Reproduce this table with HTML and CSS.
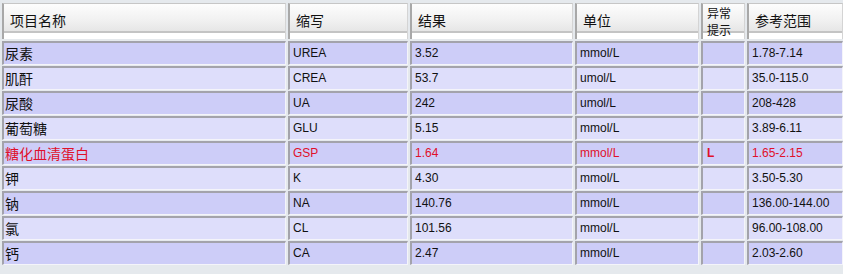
FILE: index.html
```html
<!DOCTYPE html>
<html>
<head>
<meta charset="utf-8">
<link rel="stylesheet" href="styles.css">
</head>
<body>
<div class="grid">
  <div class="hd"><span>项目名称</span></div>
  <div class="hd"><span>缩写</span></div>
  <div class="hd"><span>结果</span></div>
  <div class="hd"><span>单位</span></div>
  <div class="hd hd-two"><span>异常<br>提示</span></div>
  <div class="hd"><span>参考范围</span></div>

  <div class="c dark cn">尿素</div><div class="c dark">UREA</div><div class="c dark">3.52</div><div class="c dark">mmol/L</div><div class="c dark"></div><div class="c dark">1.78-7.14</div>
  <div class="c light cn">肌酐</div><div class="c light">CREA</div><div class="c light">53.7</div><div class="c light">umol/L</div><div class="c light"></div><div class="c light">35.0-115.0</div>
  <div class="c dark cn">尿酸</div><div class="c dark">UA</div><div class="c dark">242</div><div class="c dark">umol/L</div><div class="c dark"></div><div class="c dark">208-428</div>
  <div class="c light cn">葡萄糖</div><div class="c light">GLU</div><div class="c light">5.15</div><div class="c light">mmol/L</div><div class="c light"></div><div class="c light">3.89-6.11</div>
  <div class="c dark cn red">糖化血清蛋白</div><div class="c dark red">GSP</div><div class="c dark red">1.64</div><div class="c dark red">mmol/L</div><div class="c dark red flag">L</div><div class="c dark red">1.65-2.15</div>
  <div class="c light cn">钾</div><div class="c light">K</div><div class="c light">4.30</div><div class="c light">mmol/L</div><div class="c light"></div><div class="c light">3.50-5.30</div>
  <div class="c dark cn">钠</div><div class="c dark">NA</div><div class="c dark">140.76</div><div class="c dark">mmol/L</div><div class="c dark"></div><div class="c dark">136.00-144.00</div>
  <div class="c light cn">氯</div><div class="c light">CL</div><div class="c light">101.56</div><div class="c light">mmol/L</div><div class="c light"></div><div class="c light">96.00-108.00</div>
  <div class="c dark cn">钙</div><div class="c dark">CA</div><div class="c dark">2.47</div><div class="c dark">mmol/L</div><div class="c dark"></div><div class="c dark">2.03-2.60</div>
</div>
</body>
</html>
```
FILE: styles.css
```css
html, body {
  margin: 0;
  padding: 0;
  background: #e5e9ed;
  width: 843px;
  height: 274px;
  overflow: hidden;
}
.grid {
  display: grid;
  grid-template-columns: 286px 122px 165px 126px 46px 98px;
  grid-template-rows: 37px repeat(9, 25px);
  padding: 3px 0 0 1px;
  font-family: "Liberation Sans", Arial, sans-serif;
  font-size: 12px;
  color: #111;
}
.hd {
  margin: 0 1px 1px 1px;
  border-top: 1px solid #c6c6c6;
  border-left: 2px solid #a8a8a8;
  border-right: 1px solid #d4d4d4;
  background: linear-gradient(to bottom, #fdfdfd 0px, #f1f1f1 16px, #e6e6e6 27px, #c4c4c4 27px, #c4c4c4 29px, #ffffff 29px, #ffffff 100%);
  font-family: "Noto Sans CJK SC", sans-serif;
  font-size: 14px;
  color: #111;
  display: flex;
  align-items: flex-start;
  padding: 6px 0 0 6px;
  box-sizing: border-box;
}
.hd-two {
  padding: 0 0 0 4px;
  line-height: 17px;
  font-size: 12px;
}
.c {
  margin: 1px 1px 0 1px;
  border-style: solid;
  border-width: 2px 1px 1px 2px;
  border-color: #a3a3ab #f4f4fa #f4f4fa #a3a3ab;
  padding: 0 0 1px 3px;
  display: flex;
  align-items: center;
  white-space: nowrap;
  box-sizing: border-box;
}
.cn {
  font-family: "Noto Sans CJK SC", sans-serif;
  font-size: 14px;
  padding-left: 1px;
}
.dark { background: #cdcdf8; }
.light { background: #dedefb; }
.red { color: #e0102a; }
.flag { font-weight: bold; padding-left: 4px; }
```
